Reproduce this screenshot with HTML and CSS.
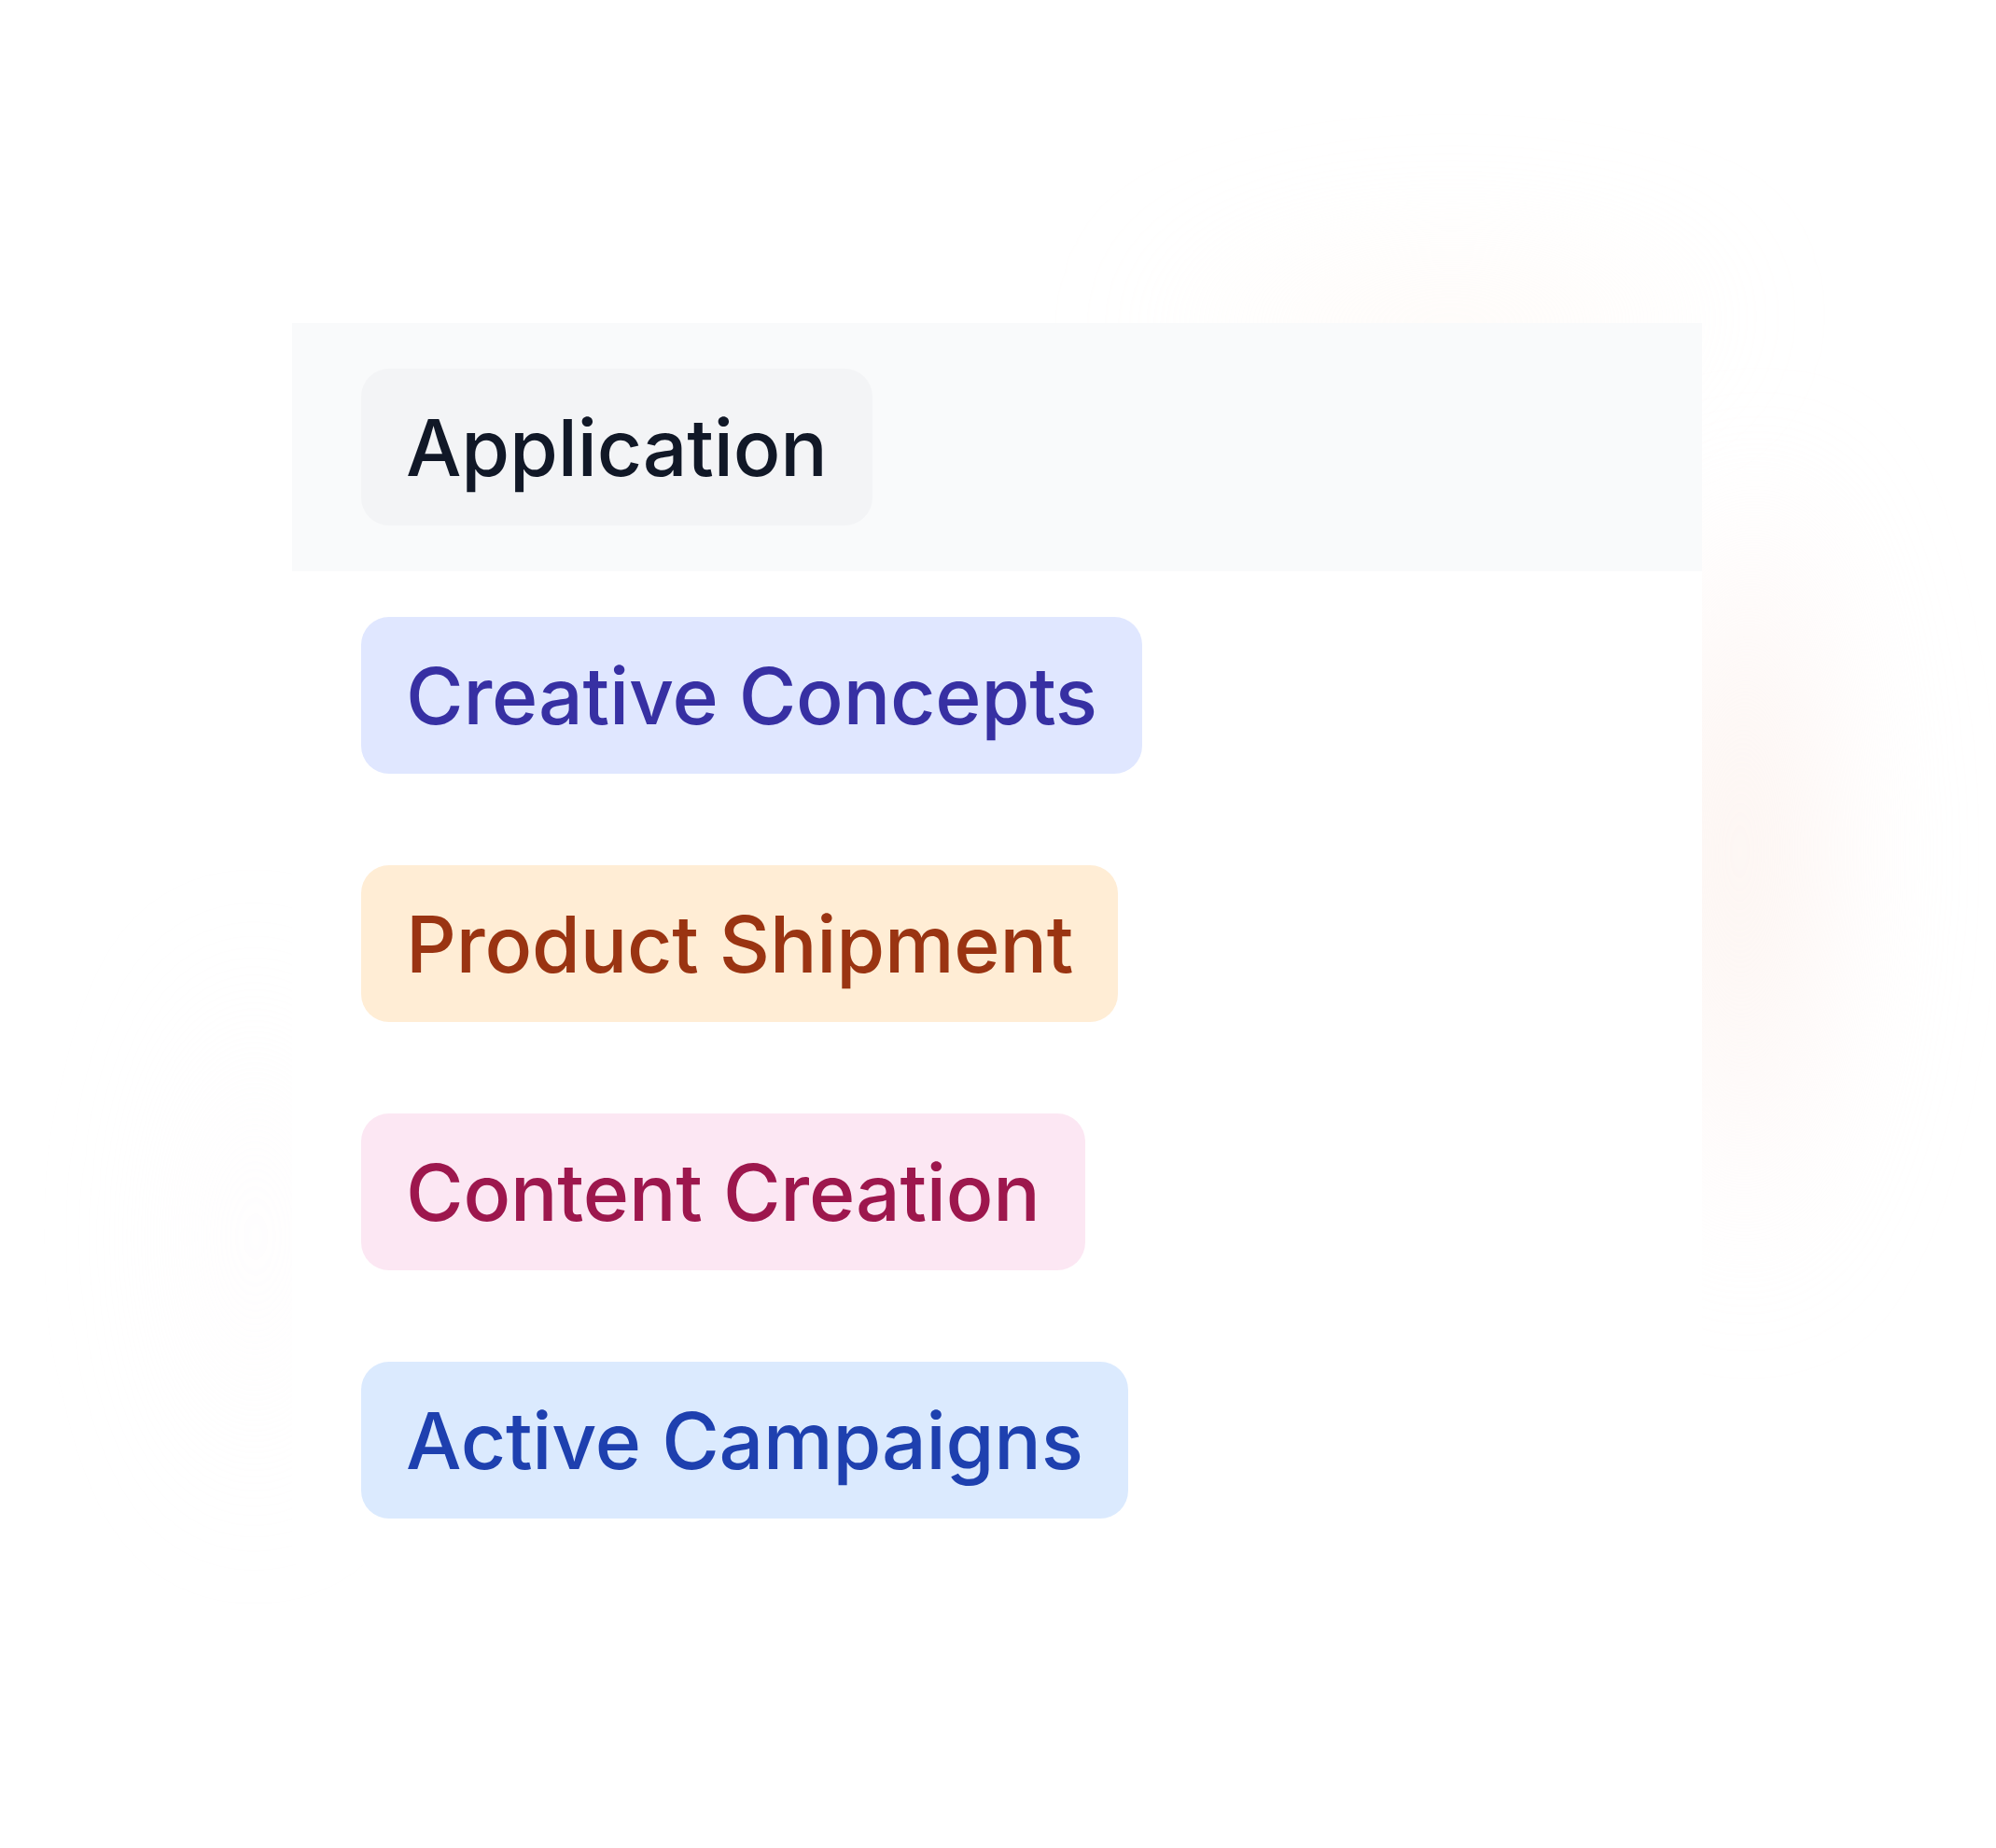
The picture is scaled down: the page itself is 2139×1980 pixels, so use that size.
FILE: index.html
```html
<!DOCTYPE html>
<html lang="en">
<head>
<meta charset="utf-8">
<title>Badges</title>
<link rel="stylesheet" href="styles.css">
</head>
<body>
<div class="stage">
  <div class="glow glow-right"></div>
  <div class="glow glow-top"></div>
  <div class="glow glow-left"></div>
  <div class="panel">
    <div class="row row-head"><span class="badge badge-gray">Application</span></div>
    <div class="row"><span class="badge badge-indigo">Creative Concepts</span></div>
    <div class="row"><span class="badge badge-orange">Product Shipment</span></div>
    <div class="row"><span class="badge badge-pink">Content Creation</span></div>
    <div class="row"><span class="badge badge-blue">Active Campaigns</span></div>
  </div>
</div>
</body>
</html>
```

FILE: styles.css
```css
html, body {
  margin: 0;
  padding: 0;
  background: #ffffff;
}

.stage {
  position: relative;
  width: 2139px;
  height: 1980px;
  overflow: hidden;
  background: #ffffff;
  font-family: "Inter", "Noto Sans", "Liberation Sans", sans-serif;
}

.glow {
  position: absolute;
  border-radius: 50%;
  filter: blur(70px);
}

.glow-right {
  left: 1780px;
  top: 520px;
  width: 220px;
  height: 860px;
  background: radial-gradient(ellipse at 25% 45%, rgba(251, 236, 228, 0.75), rgba(252, 240, 240, 0.3) 55%, rgba(255, 255, 255, 0) 75%);
}

.glow-top {
  left: 1200px;
  top: 250px;
  width: 650px;
  height: 160px;
  background: radial-gradient(ellipse at 55% 70%, rgba(253, 243, 236, 0.6), rgba(255, 255, 255, 0) 70%);
}

.glow-left {
  left: 170px;
  top: 1000px;
  width: 180px;
  height: 650px;
  background: radial-gradient(ellipse at 60% 50%, rgba(252, 247, 249, 0.4), rgba(255, 255, 255, 0) 70%);
}

.panel {
  position: relative;
  margin: 346px 0 0 313px;
  width: 1511px;
  background: #ffffff;
  display: flex;
  flex-direction: column;
}

.row {
  height: 266px;
  box-sizing: border-box;
  padding: 0 74px;
  display: flex;
  align-items: center;
}

.row-head {
  background: #f9fafb;
}

.badge {
  display: inline-flex;
  align-items: center;
  height: 168px;
  box-sizing: border-box;
  padding: 0 48px;
  border-radius: 30px;
  font-size: 84px;
  font-weight: 500;
  letter-spacing: -0.2px;
  white-space: nowrap;
}

.badge-gray { background: #f3f4f6; color: #111827; }
.badge-indigo { background: #e0e7ff; color: #3730a3; }
.badge-orange { background: #ffedd5; color: #9a3412; }
.badge-pink { background: #fce7f3; color: #9d174d; }
.badge-blue { background: #dbeafe; color: #1e40af; }
```
